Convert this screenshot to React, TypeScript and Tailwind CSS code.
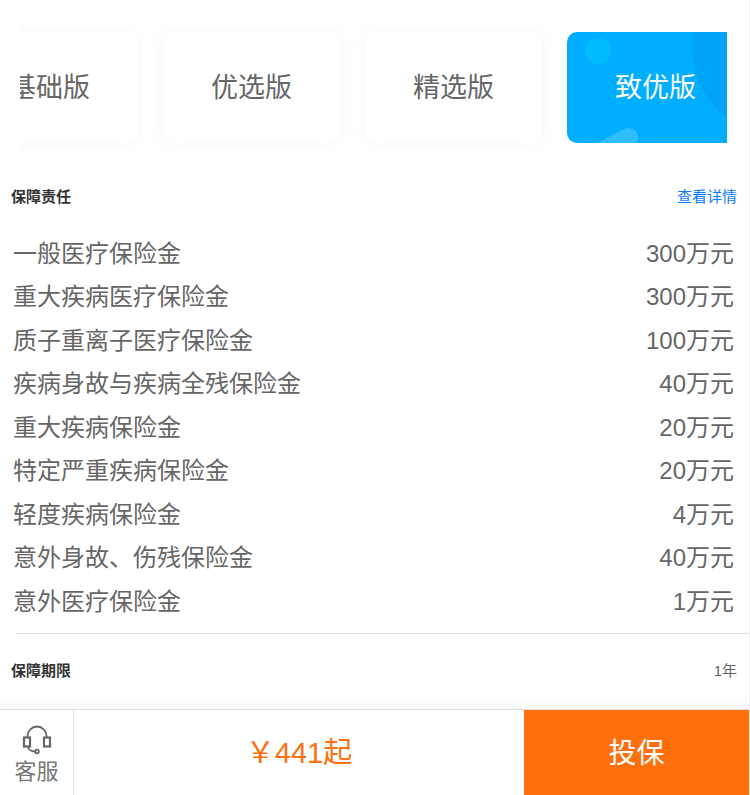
const font = "font-['Liberation_Sans','Noto_Sans_CJK_SC',sans-serif]";

const benefits = [
  ["一般医疗保险金", "300万元"],
  ["重大疾病医疗保险金", "300万元"],
  ["质子重离子医疗保险金", "100万元"],
  ["疾病身故与疾病全残保险金", "40万元"],
  ["重大疾病保险金", "20万元"],
  ["特定严重疾病保险金", "20万元"],
  ["轻度疾病保险金", "4万元"],
  ["意外身故、伤残保险金", "40万元"],
  ["意外医疗保险金", "1万元"],
];

function PlanCard({ name }: { name: string }) {
  return (
    <div className="flex h-[111px] w-[177px] shrink-0 items-center justify-center rounded-[10px] bg-white pt-[2px] text-[27px] text-[#666] shadow-[0_0_12px_rgba(215,225,235,0.3)]">
      {name}
    </div>
  );
}

function ActiveCard() {
  return (
    <div className="relative flex h-[111px] w-[177px] shrink-0 items-center justify-center overflow-hidden rounded-[10px] bg-[#00aeff] pt-[2px] text-[27px] text-white">
      <span className="absolute left-[18px] top-[6px] h-[26px] w-[26px] rounded-full bg-[#00bcff]" />
      <span className="absolute left-[125px] top-[-80px] h-[187px] w-[187px] rounded-full bg-[#00a4f6]" />
      <span className="absolute left-[23px] top-[103px] h-[20px] w-[50px] -rotate-[28deg] rounded-full bg-[#30bdff]" />
      <span className="relative">致优版</span>
    </div>
  );
}

export default function App() {
  return (
    <div className={`${font} relative h-[795px] w-[750px] overflow-hidden border-r border-[#eeeeee] bg-white`}>
      <div className="ml-5 mr-[22px] h-[155px] overflow-hidden pt-8">
        <div className="ml-[-59px] flex gap-[25px] pb-3">
          <PlanCard name="基础版" />
          <PlanCard name="优选版" />
          <PlanCard name="精选版" />
          <ActiveCard />
        </div>
      </div>

      <div className="flex h-[50px] items-center justify-between pl-[11px] pr-3 pt-[35px] text-[15px]">
        <span className="font-bold text-[#333]">保障责任</span>
        <span className="text-[#0a7cff]">查看详情</span>
      </div>

      <div className="mt-[27px] pl-[13px] pr-[15px]">
        {benefits.map(([label, amount]) => (
          <div key={label} className="flex h-[43.5px] items-center justify-between text-2xl text-[#666]">
            <span>{label}</span>
            <span>{amount}</span>
          </div>
        ))}
      </div>

      <div className="ml-[15px] mt-[9px] border-t border-[#e0e0e0]" />

      <div className="flex items-center justify-between pl-[11px] pr-3 pt-[26px] text-[15px]">
        <span className="font-bold text-[#333]">保障期限</span>
        <span className="text-[#666]">1年</span>
      </div>

      <div className="absolute bottom-0 left-0 right-0 flex h-[86px] border-t border-[#dddddd] bg-white">
        <div className="absolute left-0 right-0 top-[-14px] h-[13px] bg-gradient-to-b from-white to-[#f8f8f8]" />
        <div className="flex w-[74px] flex-col items-center border-r border-[#dddddd] pt-[15px] text-[#777]">
          <svg width="30" height="30" viewBox="0 0 30 30" fill="none" stroke="#666" strokeWidth="1.8">
            <path d="M5.5 13V11a9.5 9.5 0 0 1 19 0v2" />
            <rect x="2" y="12.5" width="6" height="9" strokeWidth="2.2" />
            <rect x="22" y="12.5" width="6" height="9" strokeWidth="2.2" />
            <path d="M6 21.5c0 3 3 5 7 5" />
            <circle cx="15" cy="26.5" r="1.8" />
          </svg>
          <span className="mt-[3px] text-[22px] leading-7">客服</span>
        </div>
        <div className="flex flex-1 items-center justify-center pt-[2px] text-[29px] text-[#ff6f10]">￥441起</div>
        <div className="flex w-[225px] items-center justify-center bg-[#ff6f0c] pt-[2px] text-[28px] text-white">投保</div>
      </div>
    </div>
  );
}
